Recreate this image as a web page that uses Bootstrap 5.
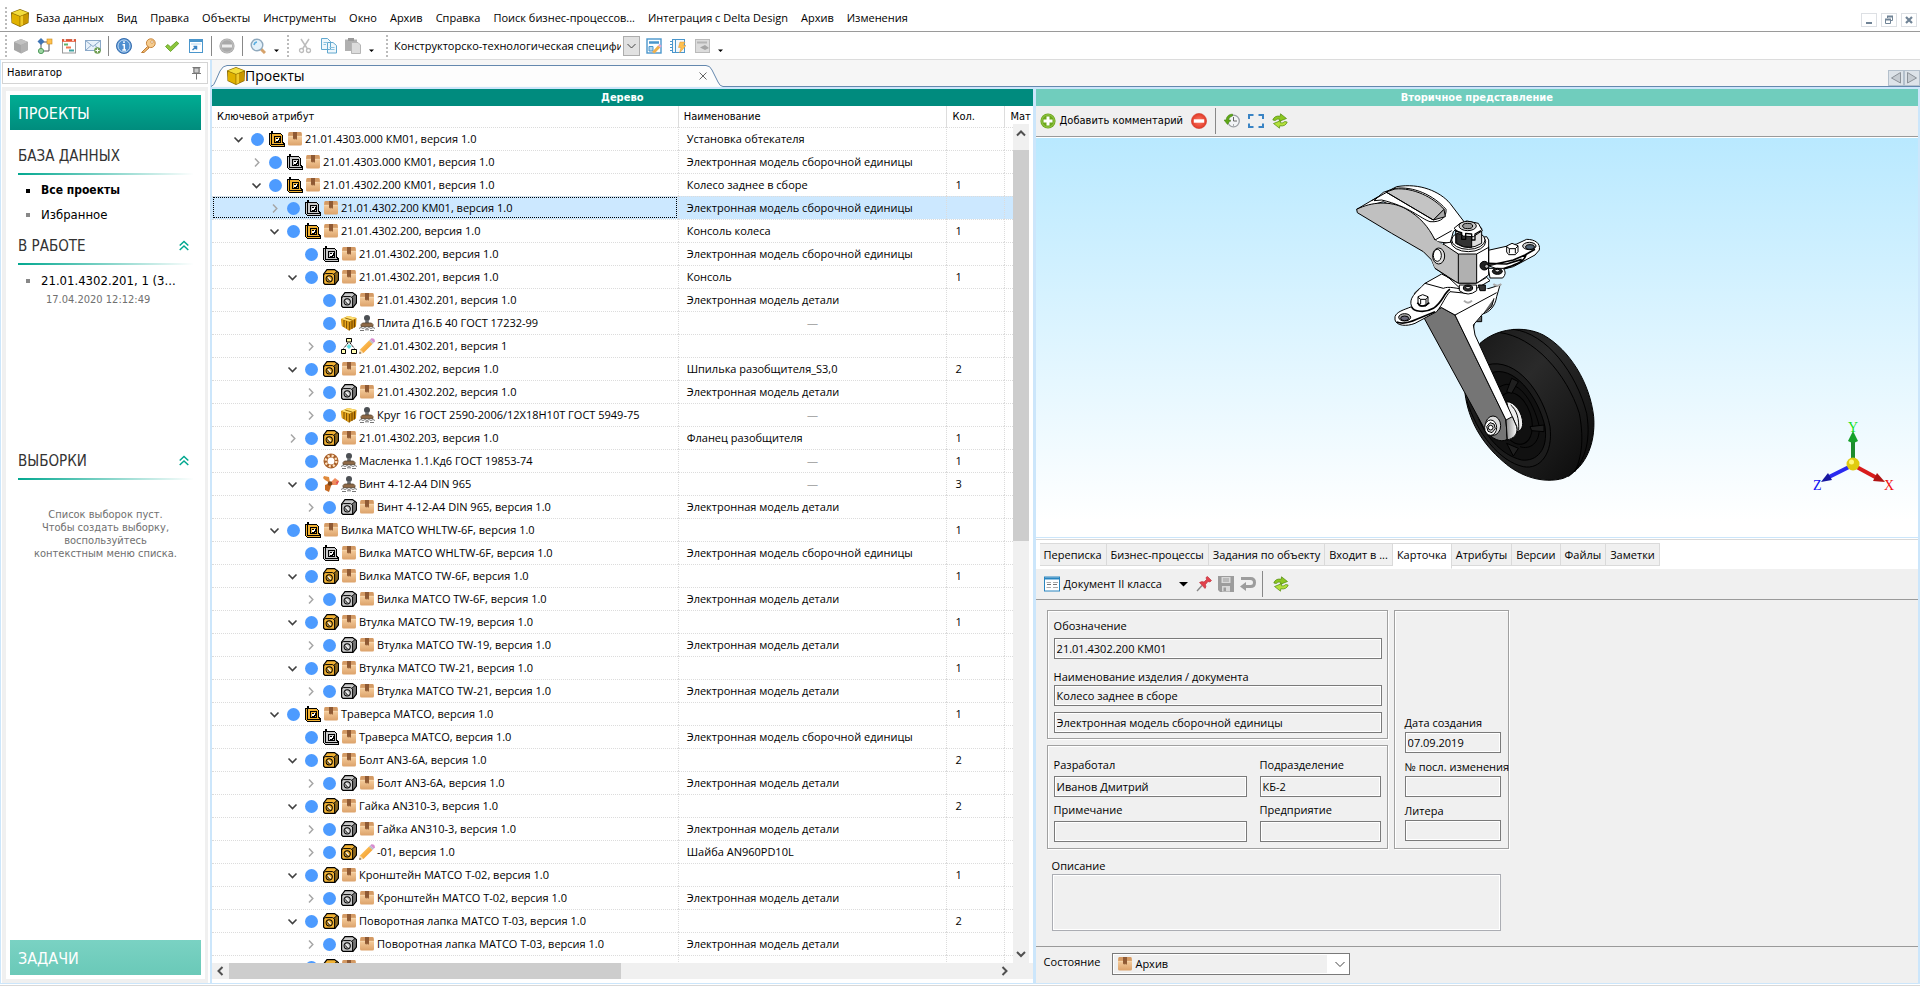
<!DOCTYPE html>
<html lang="ru">
<head>
<meta charset="utf-8">
<meta name="viewport" content="width=device-width, initial-scale=1">
<title>Проекты</title>
<link rel="stylesheet" href="https://cdn.jsdelivr.net/npm/bootstrap@5.3.0/dist/css/bootstrap.min.css">
<style>
:root { --teal:#008b7e; --mint:#70cdbd; --edge:#cce6fb; --face:#f0f0f0; --line:#9a9a9a; }
body { font:11px/16px "Open Sans","Noto Sans",sans-serif; color:#000; background:#fff; height:100vh; overflow:hidden; }
button,input,select,textarea { font:inherit; color:inherit; border-radius:0; }
svg { display:block; flex:none; }
a { color:inherit; text-decoration:none; }
.minh0 { min-height:0; }
.minw0 { min-width:0; }
.tahoma { font-family:"DejaVu Sans Condensed","DejaVu Sans",sans-serif; }
.menubar { height:32px; border-bottom:1px solid var(--line); padding:4px 3px 0 5px; }
.menubar .links { gap:13px; margin-left:7px; }
.grip { width:2px; height:22px; background:repeating-linear-gradient(#bbb 0 2px,transparent 2px 4px); flex:none; }
.tools { height:28px; border-bottom:1px solid #dcdcdc; padding-left:5px; gap:6px; }
.tool { border:0; background:none; padding:0; display:flex; flex:none; }
.vsep { width:1px; height:20px; background:#888; flex:none; margin:0 -1px; }
.vsep.tall { height:26px; margin:0; }
.winbtn { width:16px; height:14px; border:1px solid #dde0e4; background:#fff; padding:0; display:flex; align-items:center; justify-content:center; }
.combo { position:relative; }
.combo select { appearance:none; border:0; background:none; height:20px; padding:0; outline:0; }
.combo svg { position:absolute; pointer-events:none; }
.spec select { width:246px; padding-right:19px; }
.navpane { width:212px; flex:none; border-left:1px solid var(--edge); border-right:2px solid var(--edge); padding:2px 2px 0 1px; }
.navhead { height:22px; border:1px solid #d4d4d4; padding:0 5px 0 4px; }
.navbody { background:var(--face); margin-top:3px; padding:4px 3px 4px 4px; }
.navin { background:#fff; padding:4px; }
.banner { height:35px; line-height:35px; padding-left:8px; font-size:16px; color:#fff; background:linear-gradient(#00ad93,#008c7d); border:0; text-align:left; }
.banner.low { background:linear-gradient(#7ad2c3,#6ac9b8); }
.sect { font-size:15px; line-height:20px; margin:13px 8px 0; padding-bottom:7px; color:#333; border-bottom:2px solid; border-image:linear-gradient(90deg,#00a78f,#fff) 1; }
.navitem { font-size:13px; line-height:17px; margin-top:7px; padding-left:31px; position:relative; }
.navitem::before { content:""; position:absolute; left:16px; top:7px; width:4px; height:4px; background:#888; }
.navitem.on { font-weight:700; font-size:12px; }
.navitem.on::before { background:#000; }
.dim { color:#707070; line-height:13px; }
.stamped { margin-bottom:132px; }
.tabband { height:29px; background:#f6f6f6; border-bottom:2px solid var(--edge); }
.tabfoot { border-bottom:1px solid #6488ae; }
.doc { margin-left:-1px; height:27px; position:relative; flex:none; width:512px; }
.doc > svg { position:absolute; left:0; top:0; }
.doc a { position:relative; font-size:14px; }
.paneltitle { height:17px; line-height:17px; color:#fff; font-weight:700; text-align:center; background:var(--teal); flex:none; }
.paneltitle.second { background:var(--mint); }
.treepane { flex:823 1 0; min-width:0; border-right:3px solid var(--edge); }
.sidepane { flex:885 1 0; min-width:0; border-right:2px solid var(--edge); }
.grid { table-layout:fixed; width:100%; border-collapse:separate; border-spacing:0; }
.grid .ckey { width:56.750%; }
.grid .cname { width:32.750%; }
.grid .cqty { width:58px; }
.grid th { height:21px; font-weight:400; padding:0 0 0 5px; white-space:nowrap; overflow:hidden; vertical-align:middle; }
.grid th + th { border-left:1px solid #ddd; }
.grid td { height:23px; padding:0 8px; border-top:1px dotted #dcdcdc; white-space:nowrap; overflow:hidden; vertical-align:middle; }
.grid td + td { border-left:1px dotted #dcdcdc; }
.grid td:first-child { padding:0; }
.grid tr.sel td { background:#cce8ff; }
.grid tr.sel td:first-child { outline:1px dotted #000; outline-offset:-2px; }
.grid td.none { text-align:center; color:#aaa; }
.node { display:flex; align-items:center; height:20px; padding-left:calc(20px + var(--lvl) * 18px); }
.chev { width:13px; margin-right:6px; }
.dot { width:13px; height:13px; border-radius:50%; background:#4d9bff; margin-right:5px; flex:none; }
.node .wide { margin:0 2px; }
.node .slim { margin:0 3px; }
.sbar { background:var(--face); flex:none; display:flex; align-items:center; }
.sbar .thumb { background:#cdcdcd; }
.vbar { width:20px; border-right:4px solid #fff; margin:18px 0 0 -20px; }
.vbar .thumb { height:46.600%; }
.hbar .thumb { width:49%; height:16px; }
.corner { width:20px; }
.viewport3d { height:400px; flex:none; background:linear-gradient(#b9e9ff,#fff 96%); border-top:1px solid #fff; position:relative; }
.triad { position:absolute; right:20px; bottom:37px; }
.bar2 { height:31px; background:var(--face); border-bottom:1px solid var(--line); flex:none; }
.cardtools { gap:6px; }
.tabs { padding:3px 0 0 4px; height:29px; background:#fff; flex:none; }
.tabs a { height:23px; line-height:22px; background:var(--face); border:1px solid #dadada; border-left:0; padding:0 4px; white-space:nowrap; }
.tabs a.on { background:#fff; border-bottom-color:#fff; height:26px; }
.face { background:var(--face); }
.frame { border:1px solid #a0a0a0; box-shadow:inset 1px 1px #fff,1px 1px #fff; }
.fld { display:block; width:100%; height:21px; line-height:17px; border:1px solid #7a7a7a; background:var(--face); padding:0 2px; box-shadow:inset 0 0 0 1px #fff; outline:0; }
.frame label { display:block; white-space:nowrap; line-height:18px; }
.cardform { display:grid; grid-template-columns:341px 115px; grid-template-rows:129px 104px auto; gap:6px; padding:10px 0 0 11px; width:max-content; }
.g-main { padding:6px 5px 0 6px; }
.g-main label { margin-bottom:3px; }
.g-main label.snug { margin:11px 0 1px; line-height:14px; }
.g-main .follow { margin-top:6px; }
.g-who { grid-row:2; display:grid; grid-template-columns:193px 121px; column-gap:13px; padding:10px 6px 0; align-content:start; row-gap:4px; }
.g-who label { margin-bottom:2px; }
.g-date { grid-column:2; grid-row:1 / 3; padding:0 7px 7px 10px; display:flex; flex-direction:column; justify-content:end; }
.g-date label { margin-top:5px; }
.g-text { grid-column:1 / 3; padding:3px 8px 0 5px; }
.g-text textarea { height:57px; resize:none; border-color:#abadb3; }
.statebar { border-top:1px solid var(--line); height:37px; padding:6px 0 0 8px; gap:12px; }
.statebar label { line-height:18px; }
.state select { width:238px; height:22px; border:1px solid #7a7a7a; background:linear-gradient(90deg,#f0f0f0 0 214px,#fff 214px); box-shadow:inset 0 0 0 1px #fff; padding-left:22px; }
.state .pic { left:6px; top:4px; }
.state .arr { right:5px; top:6px; }
.foot { height:3px; border-top:1px solid var(--edge); border-bottom:1px solid #d8d8d8; flex:none; }
</style>
</head>
<body class="d-flex flex-column">

<svg width="0" height="0" class="position-absolute" aria-hidden="true">
  <defs>
    <linearGradient id="gTan" x1="0" y1="0" x2="0" y2="1"><stop offset="0" stop-color="#d9a06a"/><stop offset=".35" stop-color="#f3c998"/><stop offset="1" stop-color="#dca26a"/></linearGradient>
    <linearGradient id="gPen" x1="0" y1="0" x2="1" y2="1"><stop offset="0" stop-color="#ffd36b"/><stop offset="1" stop-color="#f08b1d"/></linearGradient>
    <radialGradient id="gRed"><stop offset="0" stop-color="#ff7b66"/><stop offset="1" stop-color="#e03a28"/></radialGradient>
  </defs>
  <symbol id="cube" viewBox="0 0 18 18"><path d="M9 0 18 3.500 17.500 14 9 18 .5 14 0 3.500Z" fill="#8a6a00"/><path d="M9 .8 17 3.800 9 7 1 3.800Z" fill="#f3dd3c"/><path d="M1 4.500 8.600 7.600V17L1 13.600Z" fill="#e0b200"/><path d="M17 4.500 9.400 7.600V17L17 13.600Z" fill="#c99700"/><path d="M9.400 7.600 12 6.500V16L9.400 17Z" fill="#f0cb2a"/></symbol>
  <symbol id="cubeg" viewBox="0 0 16 16"><path d="M8 1 15 4V12L8 15.500 1 12V4Z" fill="#a6a6a6"/><path d="M8 1 15 4 8 7 1 4Z" fill="#c2c2c2"/><path d="M8 7 15 4V12L8 15.500Z" fill="#b2b2b2"/></symbol>
  <symbol id="asm" viewBox="0 0 16 16" shape-rendering="crispEdges"><path d="M.5 2.500H2.500V.5H3.500V2.500H11.500L13.500 4.500V11.500L15.500 12.500V15.500H2.500L.5 13.500Z" fill="currentColor" stroke="#000"/><path d="M2.500 2.500V13.500H15" fill="none" stroke="#000"/><path d="M5.500 5.500H11.500V11.500H5.500Z" fill="none" stroke="#000"/><path d="M7 6.500H10V7H10.500V10H10V10.500H7V10H6.500V7H7Z" fill="#000"/><path d="M7 9.500V8H8.500V7H10V9H9V10H7Z" fill="#fff"/></symbol>
  <symbol id="part" viewBox="0 0 16 16"><path d="M.6 5 4 .6H11.500L15.400 3.500V11L12 15.400H2L.6 14Z" fill="currentColor" stroke="#000" stroke-width="1.200"/><path d="M11.500 5 14.500 2.800 15 11 11.800 15Z" fill="#000" fill-opacity=".42"/><path d="M.8 5.500 2.300 4.600H9.500L11.600 6V15M11 5.200 14.300 2.300" fill="none" stroke="#000"/><circle cx="6.200" cy="9.800" r="3.600" fill="#000"/><circle cx="6.200" cy="9.800" r="2.600" fill="currentColor"/><path d="M5.300 7.800A2.500 2.500 0 0 0 8.300 11.200Z" fill="#fff"/><path d="M4.300 8.500A2.700 2.700 0 0 0 7.500 12Z" fill="#000" fill-opacity=".6"/></symbol>
  <symbol id="box" viewBox="0 0 14 14"><rect x="0" y="0" width="14" height="13.500" rx="1.500" fill="url(#gTan)"/><path d="M1.500 0H12.500L14 4H0Z" fill="#d39a65"/><path d="M0 4.300H14" stroke="#f8d9b2" stroke-width=".8"/><path d="M5 0H9V6.500L8.300 8 7.500 6.500 7 8 6 6.500 5 7.500Z" fill="#8f5a34"/></symbol>
  <symbol id="stamp" viewBox="0 0 16 16"><circle cx="8" cy="3" r="3" fill="#4c5054"/><path d="M6.500 5H9.500L10 8.500H6Z" fill="#666a6e"/><path d="M3.500 8H12.500L14 9.500V11.500H2V9.500Z" fill="#8e6a48" stroke="#5c4630" stroke-width=".8"/><path d="M0 13.500 2 12.500 4 13.500 6 12.500 8 13.500 10 12.500 12 13.500 14 12.500 16 13.500M1 15.500H5M6 14.800H10M11 15.500H15" fill="none" stroke="#555" stroke-width=".8"/></symbol>
  <symbol id="gold" viewBox="0 0 16 16"><path d="M0 4 7 1 15.500 3 15 11.500 8 15.500 .8 11Z" fill="#c8860a"/><path d="M0 4 7 1 15.500 3 8.500 6.500Z" fill="#ffdf70"/><path d="M.5 4.500 8 6.800 8 15 1 10.800Z" fill="#eaa81c"/><path d="M3 5V12M5.600 6V13.500M8.300 7V15.500M11 6V14M13.500 4.500V12.500" stroke="#6a4100" stroke-width=".9"/><path d="M4.200 3 11.500 5.200" stroke="#8a5a00" stroke-width=".9"/></symbol>
  <symbol id="flow" viewBox="0 0 16 16"><g fill="#fffbb0" stroke="#000"><path d="M5.500.5H10.500V4H5.500ZM.5 11.500H4.500V15.500H.5ZM10.500 11.500H15.500V15.500H10.500Z"/></g><path d="M7 5 2.500 10.500M9 5 13.500 10.500" stroke="#000" stroke-dasharray="2 1"/><path d="M8 6 10.500 8.500 8 11 5.500 8.500Z" fill="#5fe0e0"/></symbol>
  <symbol id="pencil" viewBox="0 0 16 16"><path d="M1 11.500 10 2.500 13.500 6 4.500 15 .5 15.500Z" fill="url(#gPen)"/><path d="M.3 15.700 1.300 11.500 4.500 14.700Z" fill="#f8dcae"/><path d="M.2 15.800 .8 13.800 2.200 15.200Z" fill="#444"/><path d="M10 2.500 11.300 1.200 14.800 4.700 13.500 6Z" fill="#b8bcc4"/><path d="M11.300 1.200 12.500.2Q16 0 15.900 3.500L14.800 4.700Z" fill="#d88bd0"/></symbol>
  <symbol id="ring" viewBox="0 0 16 16"><circle cx="8" cy="8" r="5.500" fill="#fff" stroke="#a9602a" stroke-width="4"/><circle cx="8" cy="8" r="5.300" fill="none" stroke="#ffe3c0" stroke-width="2.300" stroke-dasharray="2.100 2.060"/></symbol>
  <symbol id="prop" viewBox="0 0 16 16"><path d="M1 0 6 1 7 7 2 4 0 2Z" fill="#e08a3c"/><path d="M7 7 12 2 16 5 14 9 8 9Z" fill="#ef8b5b"/><path d="M2 9 7 7 8 10 6 16 2 14Z" fill="#c66a22"/><circle cx="7" cy="7.500" r="2.300" fill="#7c4318"/><path d="M13 6 16 5 14 9Z" fill="#e04858"/></symbol>
  <symbol id="plus" viewBox="0 0 16 16"><circle cx="8" cy="8" r="7.600" fill="#6ba81b"/><circle cx="8" cy="8" r="6.200" fill="none" stroke="#a8d25e" stroke-width=".8"/><path d="M8 3.500V12.500M3.500 8H12.500" stroke="#fff" stroke-width="3"/></symbol>
  <symbol id="minus" viewBox="0 0 16 16"><circle cx="8" cy="8" r="7.600" fill="url(#gRed)" stroke="#cf3a2a" stroke-width=".6"/><rect x="2.800" y="6.300" width="10.400" height="3.400" fill="#fff"/></symbol>
  <symbol id="stop" viewBox="0 0 16 16"><circle cx="8" cy="8" r="7.600" fill="#a9a9a9"/><circle cx="8" cy="8" r="6.300" fill="none" stroke="#c4c4c4"/><rect x="3" y="6.500" width="10" height="3" fill="#ececec"/></symbol>
  <symbol id="hist" viewBox="0 0 16 16"><circle cx="9.500" cy="8" r="5.800" fill="#f2f4f6" stroke="#9a9ea3" stroke-width="1.300"/><path d="M9.500 4V8H13M9.500 11.500V12.500M6 8H7" stroke="#555" stroke-width=".9" fill="none"/><path d="M8.500 1A7 7 0 0 0 2 7H0L3.500 11.500 6.500 7H4.500A5 5 0 0 1 8.500 3Z" fill="#5fa817" stroke="#3d7c0c" stroke-width=".5"/></symbol>
  <symbol id="fit" viewBox="0 0 16 16"><path d="M1 6V2H5.500M10.500 2H15V6M15 10.500V14H10.500M5.500 14H1V10.500" fill="none" stroke="#3a84c4" stroke-width="2"/></symbol>
  <symbol id="refresh" viewBox="0 0 16 16"><g stroke="#4f8a0a" stroke-width=".7"><path d="M.8 7Q2.500 2.200 8.300 3.200L8.500.8 14.500 5.500 7.200 8.400 7.700 6.200Q5 5.500 3.200 7.500Z" fill="#8cc721"/><path d="M15.200 9Q13.500 13.800 7.700 12.800L7.500 15.200 1.500 10.500 8.800 7.600 8.300 9.800Q11 10.500 12.800 8.500Z" fill="#b4e03c"/></g></symbol>
  <symbol id="chevD" viewBox="0 0 13 13"><path d="M2.500 4.500 6.500 8.500 10.500 4.500" fill="none" stroke="#404040" stroke-width="1.600"/></symbol>
  <symbol id="chevR" viewBox="0 0 13 13"><path d="M5 2.500 8.800 6.500 5 10.500" fill="none" stroke="#a6a6a6" stroke-width="1.500"/></symbol>
  <symbol id="twoUp" viewBox="0 0 10 11"><path d="M.7 5.500 5 1.500 9.300 5.500M.7 10 5 6 9.300 10" fill="none" stroke="#00a78f" stroke-width="1.500"/></symbol>
</svg>

<!-- menu -->
<header class="menubar d-flex align-items-center flex-shrink-0">
  <span class="grip"></span>
  <svg class="ms-1" width="18" height="18"><use href="#cube"/></svg>
  <nav class="links d-flex flex-grow-1 text-nowrap">
    <a href="#">База данных</a><a href="#">Вид</a><a href="#">Правка</a><a href="#">Объекты</a><a href="#">Инструменты</a><a href="#">Окно</a><a href="#">Архив</a><a href="#">Справка</a><a href="#">Поиск бизнес-процессов...</a><a href="#">Интеграция с Delta Design</a><a href="#">Архив</a><a href="#">Изменения</a>
  </nav>
  <div class="d-flex gap-1 pt-1">
    <button class="winbtn" aria-label="Свернуть"><svg width="10" height="10"><path d="M2 8H8" stroke="#718496" stroke-width="2"/></svg></button>
    <button class="winbtn" aria-label="Восстановить"><svg width="10" height="10"><path d="M3.500 3V1.500H8.500V5.500H7M1.500 4.500H6.500V8.500H1.500Z" fill="none" stroke="#718496"/><path d="M3 1.500H9M1 4.500H7" stroke="#718496" stroke-width="2"/></svg></button>
    <button class="winbtn" aria-label="Закрыть"><svg width="10" height="10"><path d="M2 2 8 8M8 2 2 8" stroke="#718496" stroke-width="2.200"/></svg></button>
  </div>
</header>

<!-- toolbar -->
<div class="tools d-flex align-items-center flex-shrink-0" role="toolbar">
  <span class="grip"></span>
  <div class="d-flex align-items-center gap-2">
    <button class="tool" aria-label="Объект"><svg width="16" height="16"><use href="#cubeg"/></svg></button>
    <button class="tool" aria-label="Связи"><svg width="16" height="16"><path d="M4 4V13H12V4H4" fill="none" stroke="#555"/><path d="M4 0 7.500 3.500 4 7 .5 3.500Z" fill="#3f74b5"/><rect x="10" y="1" width="5" height="5" fill="#ffc04d" stroke="#c88a1c" stroke-width=".6"/><circle cx="4" cy="13" r="2.600" fill="#9ed6a4" stroke="#4f9c5b"/></svg></button>
    <button class="tool" aria-label="Календарь"><svg width="16" height="16"><rect x="1.500" y="1.500" width="13" height="13.500" fill="#fff" stroke="#9a9a9a"/><path d="M1 2.500H15" stroke="#e5502e" stroke-width="2.500"/><path d="M4 0V3M12 0V3" stroke="#fff" stroke-width="1.500"/><path d="M3 6.500H7" stroke="#5fb56b" stroke-width="2"/><path d="M5 9.500H10" stroke="#ef7a52" stroke-width="2"/><path d="M8 12.500H13" stroke="#3fa2a0" stroke-width="2"/></svg></button>
    <button class="tool" aria-label="Почта"><svg width="16" height="16"><rect x=".5" y="2.500" width="15" height="10" fill="#e8f1fa" stroke="#8aa8c8"/><path d="M.5 2.500 8 8.500 15.500 2.500M.5 12.500 6 7.500M15.500 12.500 10 7.500" fill="none" stroke="#8aa8c8"/><circle cx="12.500" cy="12.500" r="3.300" fill="#6f9e52"/><path d="M12.500 10.500V14.500M10.500 12.500H14.500" stroke="#fff"/></svg></button>
    <span class="vsep"></span>
    <button class="tool" aria-label="Сведения"><svg width="16" height="16"><circle cx="8" cy="8" r="7.500" fill="#4f8fd0" stroke="#3a6fae"/><circle cx="8" cy="8" r="6" fill="none" stroke="#bcd6f0"/><path d="M8 3.200V5M6.500 6.800H8.300V11.800M6.300 12H10" fill="none" stroke="#fff" stroke-width="1.500"/></svg></button>
    <button class="tool" aria-label="Доступ"><svg width="16" height="16"><path d="M7.500 8.500 1.500 14.500H4L9 10Z" fill="#f0b870" stroke="#c08038"/><circle cx="10.800" cy="5.200" r="4.400" fill="#f6cc8e" stroke="#c8863c"/><circle cx="12" cy="4" r="1.300" fill="#fff" stroke="#c8863c" stroke-width=".7"/></svg></button>
    <button class="tool" aria-label="Применить"><svg width="16" height="16"><path d="M1.500 8.500 4 6.500 6.500 9 12.500 3.500 14.800 5.500 6.500 13.500Z" fill="#8cc63c" stroke="#5a9a1a" stroke-width=".8"/></svg></button>
    <button class="tool" aria-label="Окно"><svg width="16" height="16"><rect x="1.500" y="1.500" width="13" height="13" fill="#fff" stroke="#4a96cc"/><path d="M2 3H14" stroke="#4a96cc" stroke-width="2"/><path d="M3 6H13" stroke="#b5d6ee"/><path d="M4.500 12 8.500 8.500M5.500 8.500H8.500V11.500" fill="none" stroke="#3a84c4" stroke-width="1.500"/></svg></button>
    <span class="vsep"></span>
    <button class="tool" aria-label="Стоп"><svg width="16" height="16"><use href="#stop"/></svg></button>
    <span class="vsep"></span>
    <button class="tool" aria-label="Поиск"><svg width="16" height="16"><path d="M10.500 10.500 15 15" stroke="#d6a26a" stroke-width="3"/><circle cx="7" cy="7" r="5.800" fill="#e3f1fa" stroke="#8fa9bd" stroke-width="1.400"/><path d="M4 7Q4.500 4.200 7 4" stroke="#5aaee0" stroke-width="1.600" fill="none"/></svg></button>
    <svg width="5" height="12"><path d="M0 9.500H5L2.500 12Z"/></svg>
    <span class="grip"></span>
    <button class="tool" aria-label="Вырезать"><svg width="16" height="16"><path d="M4 1 10.500 11M12 1 5.500 11" stroke="#bcbcbc" stroke-width="1.500"/><circle cx="4.500" cy="12.500" r="2" fill="none" stroke="#bcbcbc" stroke-width="1.300"/><circle cx="11.500" cy="12.500" r="2" fill="none" stroke="#bcbcbc" stroke-width="1.300"/></svg></button>
    <button class="tool" aria-label="Копировать"><svg width="16" height="16"><path d="M.5.500H6.500L9.500 3.500V11.500H.5ZM6.500 4.500H12L15.500 7.500V15H6.500Z" fill="#eef7fc" stroke="#62a8cf"/><path d="M2.500 4.500H6M2.500 6.500H5M8.500 9.500H13.500M8.500 11.500H13.500" stroke="#8bc3e0"/></svg></button>
    <button class="tool" aria-label="Вставить"><svg width="16" height="16"><path d="M0 1.500H12V13H0Z" fill="#b0b0b0"/><rect x="3" y="0" width="6" height="3" fill="#9a9a9a"/><path d="M6.500 4.500H13L15.500 7V15.500H6.500Z" fill="#dcdcdc" stroke="#b5b5b5"/></svg></button>
    <svg width="5" height="12"><path d="M0 9.500H5L2.500 12Z"/></svg>
    <span class="grip ms-1"></span>
  </div>
  <div class="combo spec d-flex align-items-center">
    <select aria-label="Представление"><option>Конструкторско-технологическая спецификация</option></select>
    <svg class="end-0" width="17" height="20"><rect x=".5" y=".5" width="16" height="19" fill="#e1e1e1" stroke="#adadad"/><path d="M4.500 8 8.500 12 12.500 8" fill="none" stroke="#444"/></svg>
  </div>
  <div class="d-flex align-items-center gap-2">
    <button class="tool" aria-label="Изменить вид"><svg width="16" height="16"><rect x="1" y="1" width="14" height="14" fill="#fff" stroke="#4a96cc" stroke-width="1.400"/><path d="M3 4.500H13" stroke="#4a96cc" stroke-width="2.500"/><path d="M3 8.500H7V13H3Z" fill="#b5d6ee" stroke="#4a96cc"/><path d="M6 14 12 7.500 14.300 9.500 8.500 15.500Z" fill="#f0b04c"/><path d="M12 7.500 13.500 6 15.800 8 14.300 9.500Z" fill="#e3a6d2"/></svg></button>
    <button class="tool" aria-label="Быстрый вид"><svg width="16" height="16"><rect x="2.500" y="1.500" width="12" height="13" fill="#f3f8fb" stroke="#4a96cc"/><path d="M0 3.500H3M0 6.500H3M0 9.500H3M0 12.500H3M5.500 2V14" stroke="#4a96cc"/><path d="M10 4H15L13 7.500H16L9.500 15 11 9.500H8.500Z" fill="#ffc04d" stroke="#d8963c" stroke-width=".5"/></svg></button>
    <button class="tool" aria-label="Закрепить вид"><svg width="16" height="16"><rect x="1.500" y="1.500" width="14" height="13" fill="#dcdcdc" stroke="#bababa"/><path d="M3 4.500H13" stroke="#b5b5b5" stroke-width="2"/><path d="M6 9.500 11 7 15 10 11 12Z" fill="#a5a5a5"/></svg></button>
    <svg width="5" height="12"><path d="M0 9.500H5L2.500 12Z"/></svg>
  </div>
</div>

<div class="d-flex flex-grow-1 minh0">
  <!-- navigator -->
  <aside class="navpane tahoma d-flex flex-column">
    <div class="navhead d-flex align-items-center justify-content-between flex-shrink-0">
      <span>Навигатор</span>
      <button class="tool" aria-label="Закрепить"><svg width="11" height="13"><path d="M1.500.5H9.500M3 1V5.500M8 1V5.500M1 6.500H10M5.500 7V12.500" stroke="#777" fill="none"/><path d="M3 1H8V6H3Z" fill="#ccc" stroke="#777"/></svg></button>
    </div>
    <div class="navbody flex-grow-1 d-flex flex-column">
      <div class="navin flex-grow-1 d-flex flex-column">
        <button class="banner">ПРОЕКТЫ</button>
        <h2 class="sect mt-3">БАЗА ДАННЫХ</h2>
        <a href="#" class="navitem on">Все проекты</a>
        <a href="#" class="navitem">Избранное</a>
        <h2 class="sect d-flex justify-content-between">В РАБОТЕ <svg class="me-1 mt-1" width="10" height="11"><use href="#twoUp"/></svg></h2>
        <a href="#" class="navitem">21.01.4302.201, 1 (3...</a>
        <div class="dim stamped mt-1 ps-4"><span class="ms-2 ps-1">17.04.2020 12:12:49</span></div>
        <h2 class="sect d-flex justify-content-between">ВЫБОРКИ <svg class="me-1 mt-1" width="10" height="11"><use href="#twoUp"/></svg></h2>
        <p class="dim text-center mt-4 mb-auto pt-1">Список выборок пуст.<br>Чтобы создать выборку,<br>воспользуйтесь<br>контекстным меню списка.</p>
        <button class="banner low">ЗАДАЧИ</button>
      </div>
    </div>
  </aside>

  <main class="flex-grow-1 d-flex flex-column minw0">
    <div class="tabband d-flex flex-shrink-0">
      <div class="doc d-flex align-items-center">
        <svg width="512" height="27"><path d="M0 26.500Q3 26 5 20L9 11Q12 5.500 16 5.500H495Q499 5.500 501 10L507 22Q509 26.500 512 26.500" fill="#fdfdfd" stroke="#6488ae"/></svg>
        <a href="#" class="d-flex align-items-center flex-grow-1 ps-3 pt-1"><svg width="18" height="18"><use href="#cube"/></svg><span>Проекты</span></a>
        <button class="tool position-relative me-3 mt-1" aria-label="Закрыть вкладку"><svg width="8" height="8"><path d="M.5.500 7.500 7.500M7.500.500.5 7.500" stroke="#666"/></svg></button>
      </div>
      <div class="tabfoot flex-grow-1 d-flex justify-content-end align-items-end">
        <button class="tool" aria-label="Влево"><svg width="16" height="16"><rect x=".5" y=".5" width="15" height="15" fill="#dde3e9" stroke="#b4c0cc"/><path d="M12.500 2.500V13L3.500 8Z" fill="#c6ccd2" stroke="#8c9299"/></svg></button>
        <button class="tool" aria-label="Вправо"><svg width="16" height="16"><rect x=".5" y=".5" width="15" height="15" fill="#dde3e9" stroke="#b4c0cc"/><path d="M3.500 2.500V13L12.500 8Z" fill="#c6ccd2" stroke="#8c9299"/></svg></button>
      </div>
    </div>

    <div class="d-flex flex-grow-1 minh0">
      <!-- tree -->
      <section class="treepane d-flex flex-column">
        <div class="paneltitle tahoma">Дерево</div>
        <div class="d-flex flex-grow-1 minh0">
          <div class="flex-grow-1 overflow-hidden">
            <table class="grid">
              <colgroup><col class="ckey"><col class="cname"><col class="cqty"><col></colgroup>
              <thead class="tahoma"><tr><th>Ключевой атрибут</th><th>Наименование</th><th>Кол.</th><th>Мат</th></tr></thead>
              <tbody id="rows"></tbody>
            </table>
          </div>
          <div class="sbar vbar flex-column">
            <svg width="16" height="26"><path d="M4 11.500 8 7.500 12 11.500" fill="none" stroke="#505050" stroke-width="2"/></svg>
            <div class="thumb w-100"></div>
            <svg class="mt-auto" width="16" height="16"><path d="M4 5 8 9 12 5" fill="none" stroke="#505050" stroke-width="2"/></svg>
          </div>
        </div>
        <div class="d-flex mb-1">
          <div class="sbar hbar flex-grow-1">
            <svg width="17" height="16"><path d="M10.500 4 6.500 8 10.500 12" fill="none" stroke="#505050" stroke-width="2"/></svg>
            <div class="thumb"></div>
            <svg class="ms-auto" width="17" height="16"><path d="M6.500 4 10.500 8 6.500 12" fill="none" stroke="#505050" stroke-width="2"/></svg>
          </div>
          <div class="face corner"></div>
        </div>
      </section>

      <!-- secondary view -->
      <section class="sidepane d-flex flex-column">
        <div class="paneltitle second tahoma">Вторичное представление</div>
        <div class="bar2 tahoma d-flex align-items-center gap-2 ps-1">
          <button class="tool align-items-center gap-1"><svg width="16" height="16"><use href="#plus"/></svg>Добавить комментарий</button>
          <button class="tool" aria-label="Удалить"><svg width="16" height="16"><use href="#minus"/></svg></button>
          <span class="vsep tall"></span>
          <button class="tool" aria-label="История"><svg width="16" height="16"><use href="#hist"/></svg></button>
          <button class="tool" aria-label="Вписать"><svg width="16" height="16"><use href="#fit"/></svg></button>
          <button class="tool" aria-label="Обновить"><svg width="16" height="16"><use href="#refresh"/></svg></button>
        </div>
        <div class="viewport3d d-flex justify-content-center align-items-start">
          <svg class="mt-4" width="340" height="350" viewBox="21 6 1020 1050" stroke="#000" stroke-width="3" stroke-linejoin="round" fill="#fff">
            <defs>
              <linearGradient id="tyre" x1="0" y1="0" x2="1" y2="1"><stop offset="0" stop-color="#161616"/><stop offset=".4" stop-color="#2a2a2a"/><stop offset=".7" stop-color="#1a1a1a"/><stop offset="1" stop-color="#0a0a0a"/></linearGradient>
              <linearGradient id="endcap"><stop offset="0" stop-color="#8a8a8a"/><stop offset="1" stop-color="#fff"/></linearGradient>
            </defs>
            <!-- wheel -->
            <path d="M540 550C590 505 670 495 730 525C810 570 870 670 881 770C888 860 850 930 790 955C730 972 660 950 610 905C545 850 505 780 495 700Z" fill="url(#tyre)"/>
            <path d="M640 508C740 520 830 640 860 760C875 850 850 915 805 950" fill="none"/>
            <path d="M600 518C700 530 800 640 838 760C855 850 840 900 825 935" fill="none"/>
            <path d="M560 615C650 590 730 700 750 800C760 880 720 930 670 920C600 905 530 820 500 720" fill="#1c1c1c"/>
            <path d="M570 640C640 610 715 710 735 800C745 870 710 905 665 900C600 885 550 820 530 760" fill="#111"/>
            <path d="M600 680C650 650 700 720 718 800C720 850 690 870 660 860" fill="none"/>
            <ellipse cx="645" cy="775" rx="48" ry="80" transform="rotate(-18 645 775)" fill="#101010"/>
            <path d="M620 695 635 655 655 665 635 700ZM690 800 732 795 732 815 695 812ZM620 850 655 865 640 888ZM560 690 590 720" fill="#1f1f1f"/>
            <path d="M620 725C645 725 668 760 668 790C668 810 655 818 640 815Z" fill="#eee"/>
            <path d="M632 735C650 750 658 775 656 812" fill="none"/>
            <!-- yoke -->
            <path d="M375 370 425 342 450 355 520 400 600 375 590 410C585 440 570 455 548 462 525 475 520 490 520 520L465 465 425 443 385 455 345 410Z"/>
            <path d="M545 465 575 440 582 415M528 485H545V468" fill="#666"/>
            <path d="M343 400 358 386 350 410Z" fill="#333"/>
            <!-- fork leg -->
            <path d="M370 470 425 443 465 465 618 780 622 838C600 850 570 835 550 800L490 690Z" fill="#757575"/>
            <path d="M465 465 530 430 548 462 520 495 525 525 637 770 650 800C655 825 640 835 622 840L618 780Z"/>
            <path d="M618 780 637 770 650 800C655 825 640 835 622 840Z" fill="url(#endcap)"/>
            <path d="M440 420 545 380 590 398 548 462 530 450 465 465 425 443Z" stroke="none"/>
            <path d="M425 443 465 465 590 398" fill="none"/>
            <ellipse cx="579" cy="797" rx="23" ry="29" fill="#ddd"/><ellipse cx="572" cy="803" rx="18" ry="23"/>
            <path d="M560 800 570 788 582 792 586 806 576 818 564 814Z" fill="#ccc"/><circle cx="572" cy="803" r="7"/>
            <!-- left bracket -->
            <path d="M285 470C290 455 310 450 335 440C325 415 345 400 375 370L430 385C445 378 470 385 500 390L500 400 450 395C435 410 430 430 410 455L345 490C320 500 290 498 285 480Z"/>
            <path d="M335 440C340 455 375 460 400 445C430 425 430 400 450 388M290 486C310 494 335 485 350 478L405 455" fill="none" stroke-width="5"/>
            <ellipse cx="314" cy="472" rx="18" ry="11" fill="#aaa"/><ellipse cx="314" cy="475" rx="12" ry="7" fill="#667"/>
            <path d="M354 410 368 404 384 410V428L378 438H358L354 430Z"/><path d="M354 412 362 418H378L384 411M362 418V432M378 418V432" fill="none"/><path d="M352 428Q368 448 388 428" fill="none" stroke-width="5"/>
            <!-- right bracket -->
            <path d="M560 272 650 252 680 238C705 238 722 250 718 270L705 285 640 320 600 330 560 315Z"/>
            <path d="M560 318 640 300 675 285 705 268M600 330C640 315 670 310 678 285M565 310 620 312 665 298" fill="none" stroke-width="5"/>
            <ellipse cx="688" cy="258" rx="20" ry="11" fill="#ccc"/><ellipse cx="690" cy="261" rx="13" ry="7" fill="#567"/>
            <path d="M620 258 636 250 654 257V275L646 284H626L620 276Z"/><path d="M620 260 628 266H646L654 258M628 266V280M646 266V280" fill="none"/>
            <!-- mudguard arm -->
            <path d="M170 148 255 98 290 80C360 68 420 95 450 130L492 185 460 215 450 250 410 245 350 175 250 125Z"/>
            <path d="M170 148C215 125 270 122 315 145C360 170 385 200 405 240L440 262 470 275 470 368 405 325 395 300 370 275 275 220 172 158Z" fill="#c0c0c0"/>
            <path d="M250 97 285 85C340 78 400 105 438 148C440 170 425 188 390 185C360 175 330 140 245 120L222 122Z"/>
            <path d="M258 96 285 87C340 82 400 112 432 148L400 180Z" fill="#c4c4c4"/><path d="M400 180 432 148 436 170Z" fill="#aaa"/>
            <path d="M258 96 400 180M215 122 258 98M405 240 455 212" fill="none"/>
            <!-- hub block -->
            <path d="M430 250 560 230 566 240V345L530 370 475 370 440 350Z"/>
            <path d="M405 240 475 280V368L405 325 395 300Z" fill="#c0c0c0" stroke="none"/>
            <path d="M475 282H530V370H475Z" fill="#b0b0b0"/><path d="M430 252 475 282M530 282 566 262M405 325 475 370M566 330V260" fill="none"/>
            <ellipse cx="416" cy="288" rx="18" ry="24" fill="#ddd"/><ellipse cx="412" cy="286" rx="12" ry="18"/>
            <path d="M445 352 475 370H530L560 352 570 362 530 385 480 385Z"/>
            <!-- castle nut -->
            <ellipse cx="505" cy="245" rx="52" ry="30"/><ellipse cx="505" cy="240" rx="50" ry="28"/>
            <path d="M467 205 485 188H525L545 205V250Q505 275 467 250Z" fill="#ddd"/><path d="M470 220 515 230V262Q490 265 470 250Z" fill="#333"/>
            <path d="M462 205 480 190 500 183 535 190 547 212 520 230 490 228Z"/><path d="M467 213 485 218V238H497V220L515 222V240H525V222L543 212" fill="none" stroke-width="4"/>
            <ellipse cx="503" cy="198" rx="26" ry="14" fill="#ccc"/><ellipse cx="503" cy="198" rx="15" ry="8" fill="#999"/>
            <!-- lugs and pins -->
            <path d="M478 375H530V392Q505 412 478 392Z"/><ellipse cx="504" cy="384" rx="14" ry="9" fill="#333"/><ellipse cx="504" cy="383" rx="7" ry="4" fill="#ddd"/>
            <path d="M565 325H610Q622 340 608 354H570Z"/><ellipse cx="592" cy="334" rx="15" ry="9" fill="#222"/><ellipse cx="592" cy="332" rx="7" ry="4" fill="#ddd"/>
            <circle cx="553" cy="317" r="13" fill="#222"/><circle cx="560" cy="319" r="6" fill="#bbb"/><path d="M535 375H556V392H540Z" fill="#333"/>
            <path d="M580 372Q592 382 604 372M492 422Q504 434 516 422" fill="none" stroke="#aaa" stroke-width="6"/>
          </svg>
          <svg class="triad" width="88" height="80" font-family="Liberation Serif,serif" font-size="14">
            <path d="M43 45 17 58" stroke="#2a2af0" stroke-width="4"/><path d="M43 45 67 58" stroke="#d81c1c" stroke-width="4"/><path d="M43 45V18" stroke="#1c8c2c" stroke-width="4"/>
            <path d="M11 62 18 53 22 60Z" fill="#1616a0"/><path d="M75 62 67 53 63 61Z" fill="#b01414"/><path d="M43 11 48 21Q43 24 38 21Z" fill="#16a02a"/>
            <circle cx="43" cy="44" r="6.500" fill="#e0cc10"/><circle cx="41.500" cy="42" r="2.500" fill="#fff87a"/>
            <text x="38" y="12" fill="#10e020">Y</text><text x="3" y="70" fill="#1010f0">Z</text><text x="74" y="70" fill="#f01010">X</text>
          </svg>
        </div>
        <div class="foot"></div>
        <nav class="tabs d-flex">
          <a href="#">Переписка</a><a href="#">Бизнес-процессы</a><a href="#">Задания по объекту</a><a href="#">Входит в ...</a><a href="#" class="on">Карточка</a><a href="#">Атрибуты</a><a href="#">Версии</a><a href="#">Файлы</a><a href="#">Заметки</a>
        </nav>
        <div class="bar2 cardtools d-flex align-items-center ps-2">
          <button class="tool align-items-center gap-1"><svg width="16" height="16"><rect x=".5" y="1" width="15" height="14" fill="#fff" stroke="#2a86c0"/><path d="M0 2.500H16" stroke="#2a86c0" stroke-width="2"/><path d="M2.500 6.500H7M9 6.500H14M2.500 11.500H7M9 11.500H14" stroke="#aaa"/><path d="M3 8.500H7M9 8.500H13" stroke="#777"/></svg>Документ II класса<svg class="ms-2" width="16" height="12"><path d="M5 4H14L9.500 8.500Z"/></svg></button>
          <button class="tool" aria-label="Закрепить карточку"><svg width="16" height="16"><path d="M1 15 6 9.500" stroke="#888" stroke-width="1.400"/><path d="M3.500 6.500Q6 5 8 6L10.500 3.500 10 1.500 11.500.500 15.500 4.500 14 6 12 5.500 9.500 8.500Q10.500 11 9 12.500Z" fill="#e2424c" stroke="#b82834" stroke-width=".6"/></svg></button>
          <button class="tool" aria-label="Сохранить"><svg width="16" height="16"><path d="M0 0H16V16H2L0 14Z" fill="#9c9c9c"/><path d="M3.500 1H12.500V7H3.500ZM4 10H12V15.500H4Z" fill="#d8d8d8"/><path d="M5 3H11M5 5H11" stroke="#9c9c9c"/><path d="M5.500 11.500H8V15H5.500Z" fill="#9c9c9c"/></svg></button>
          <button class="tool" aria-label="Отменить"><svg width="16" height="16"><path d="M1 2.500H10.500Q14.500 2.500 14.500 6.500T10.500 10.500H5" fill="none" stroke="#9c9c9c" stroke-width="3"/><path d="M6 6V15L0 10.500Z" fill="#9c9c9c"/></svg></button>
          <span class="vsep tall"></span>
          <button class="tool ms-1" aria-label="Обновить карточку"><svg width="16" height="16"><use href="#refresh"/></svg></button>
        </div>
        <div class="face flex-grow-1 d-flex flex-column">
          <form class="cardform">
            <div class="frame g-main">
              <label for="f1">Обозначение</label><input id="f1" class="fld" value="21.01.4302.200 КМ01" readonly>
              <label for="f2" class="snug">Наименование изделия / документа</label><input id="f2" class="fld" value="Колесо заднее в сборе" readonly>
              <input class="fld follow" aria-label="Тип документа" value="Электронная модель сборочной единицы" readonly>
            </div>
            <div class="frame g-who">
              <div><label for="f3">Разработал</label><input id="f3" class="fld" value="Иванов Дмитрий" readonly></div>
              <div><label for="f4">Подразделение</label><input id="f4" class="fld" value="КБ-2" readonly></div>
              <div><label for="f5">Примечание</label><input id="f5" class="fld" readonly></div>
              <div><label for="f6">Предприятие</label><input id="f6" class="fld" readonly></div>
            </div>
            <div class="frame g-date">
              <label for="f7">Дата создания</label><input id="f7" class="fld" value="07.09.2019" readonly>
              <label for="f8">№ посл. изменения</label><input id="f8" class="fld" readonly>
              <label for="f9">Литера</label><input id="f9" class="fld" readonly>
            </div>
            <div class="g-text"><label for="f10">Описание</label><textarea id="f10" class="fld" readonly></textarea></div>
          </form>
          <div class="statebar mt-auto d-flex">
            <label for="st">Состояние</label>
            <div class="combo state"><select id="st"><option>Архив</option></select>
              <svg class="pic" width="14" height="14"><use href="#box"/></svg>
              <svg class="arr" width="10" height="10"><path d="M.5 3 5 7.500 9.500 3" fill="none" stroke="#444"/></svg></div>
          </div>
        </div>
      </section>
    </div>
  </main>
</div>
<div class="foot"></div>

<script src="https://cdn.jsdelivr.net/npm/bootstrap@5.3.0/dist/js/bootstrap.bundle.min.js"></script>
<script>
const GOLD = '#f2b233', GREY = '#c9c9c9', ASM = 'Электронная модель сборочной единицы', DET = 'Электронная модель детали';
// level, chevron (o open, c closed, - none), icon, status icon, text, name, quantity, selected
const rows = [
  [0,'o','A','box','21.01.4303.000 КМ01, версия 1.0','Установка обтекателя',''],
  [1,'c','a','box','21.01.4303.000 КМ01, версия 1.0',ASM,''],
  [1,'o','A','box','21.01.4302.200 КМ01, версия 1.0','Колесо заднее в сборе','1'],
  [2,'c','a','box','21.01.4302.200 КМ01, версия 1.0',ASM,'',1],
  [2,'o','A','box','21.01.4302.200, версия 1.0','Консоль колеса','1'],
  [3,'-','a','box','21.01.4302.200, версия 1.0',ASM,''],
  [3,'o','P','box','21.01.4302.201, версия 1.0','Консоль','1'],
  [4,'-','p','box','21.01.4302.201, версия 1.0',DET,''],
  [4,'-','gold','stamp','Плита Д16.Б 40 ГОСТ 17232-99','—',''],
  [4,'c','flow','pencil','21.01.4302.201, версия 1','',''],
  [3,'o','P','box','21.01.4302.202, версия 1.0','Шпилька разобщителя_S3,0','2'],
  [4,'c','p','box','21.01.4302.202, версия 1.0',DET,''],
  [4,'c','gold','stamp','Круг 16 ГОСТ 2590-2006/12Х18Н10Т ГОСТ 5949-75','—',''],
  [3,'c','P','box','21.01.4302.203, версия 1.0','Фланец разобщителя','1'],
  [3,'-','ring','stamp','Масленка 1.1.Кд6 ГОСТ 19853-74','—','1'],
  [3,'o','prop','stamp','Винт 4-12-А4 DIN 965','—','3'],
  [4,'c','p','box','Винт 4-12-А4 DIN 965, версия 1.0',DET,''],
  [2,'o','A','box','Вилка MATCO WHLTW-6F, версия 1.0','','1'],
  [3,'-','a','box','Вилка MATCO WHLTW-6F, версия 1.0',ASM,''],
  [3,'o','P','box','Вилка MATCO TW-6F, версия 1.0','','1'],
  [4,'c','p','box','Вилка MATCO TW-6F, версия 1.0',DET,''],
  [3,'o','P','box','Втулка MATCO TW-19, версия 1.0','','1'],
  [4,'c','p','box','Втулка MATCO TW-19, версия 1.0',DET,''],
  [3,'o','P','box','Втулка MATCO TW-21, версия 1.0','','1'],
  [4,'c','p','box','Втулка MATCO TW-21, версия 1.0',DET,''],
  [2,'o','A','box','Траверса MATCO, версия 1.0','','1'],
  [3,'-','a','box','Траверса MATCO, версия 1.0',ASM,''],
  [3,'o','P','box','Болт AN3-6A, версия 1.0','','2'],
  [4,'c','p','box','Болт AN3-6A, версия 1.0',DET,''],
  [3,'o','P','box','Гайка AN310-3, версия 1.0','','2'],
  [4,'c','p','box','Гайка AN310-3, версия 1.0',DET,''],
  [4,'c','P','pencil','-01, версия 1.0','Шайба AN960PD10L',''],
  [3,'o','P','box','Кронштейн MATCO T-02, версия 1.0','','1'],
  [4,'c','p','box','Кронштейн MATCO T-02, версия 1.0',DET,''],
  [3,'o','P','box','Поворотная лапка MATCO T-03, версия 1.0','','2'],
  [4,'c','p','box','Поворотная лапка MATCO T-03, версия 1.0',DET,''],
  [3,'-','P','box','','','']
];
const icons = { A:['asm',GOLD], a:['asm',GREY], P:['part',GOLD], p:['part',GREY] };
const use = (id, w, cls, col) => `<svg class="${cls}" width="${w}" height="${w}"${col ? ` color="${col}"` : ''}><use href="#${id}"/></svg>`;
document.getElementById('rows').innerHTML = rows.map(([lvl, ch, ic, st, text, name, qty, sel]) => {
  const [id, col] = icons[ic] || [ic];
  const chev = ch === 'o' ? use('chevD', 13, 'chev') : ch === 'c' ? use('chevR', 13, 'chev') : '<span class="chev"></span>';
  return `<tr${sel ? ' class="sel"' : ''}><td><div class="node" style="--lvl:${lvl}">${chev}<span class="dot"></span>${use(id, 16, '', col)}${st === 'box' ? use(st, 14, 'slim') : use(st, 16, 'wide')}<span>${text}</span></div></td>` +
    `<td${name === '—' ? ' class="none"' : ''}>${name}</td><td>${qty}</td><td></td></tr>`;
}).join('');
</script>
</body>
</html>
